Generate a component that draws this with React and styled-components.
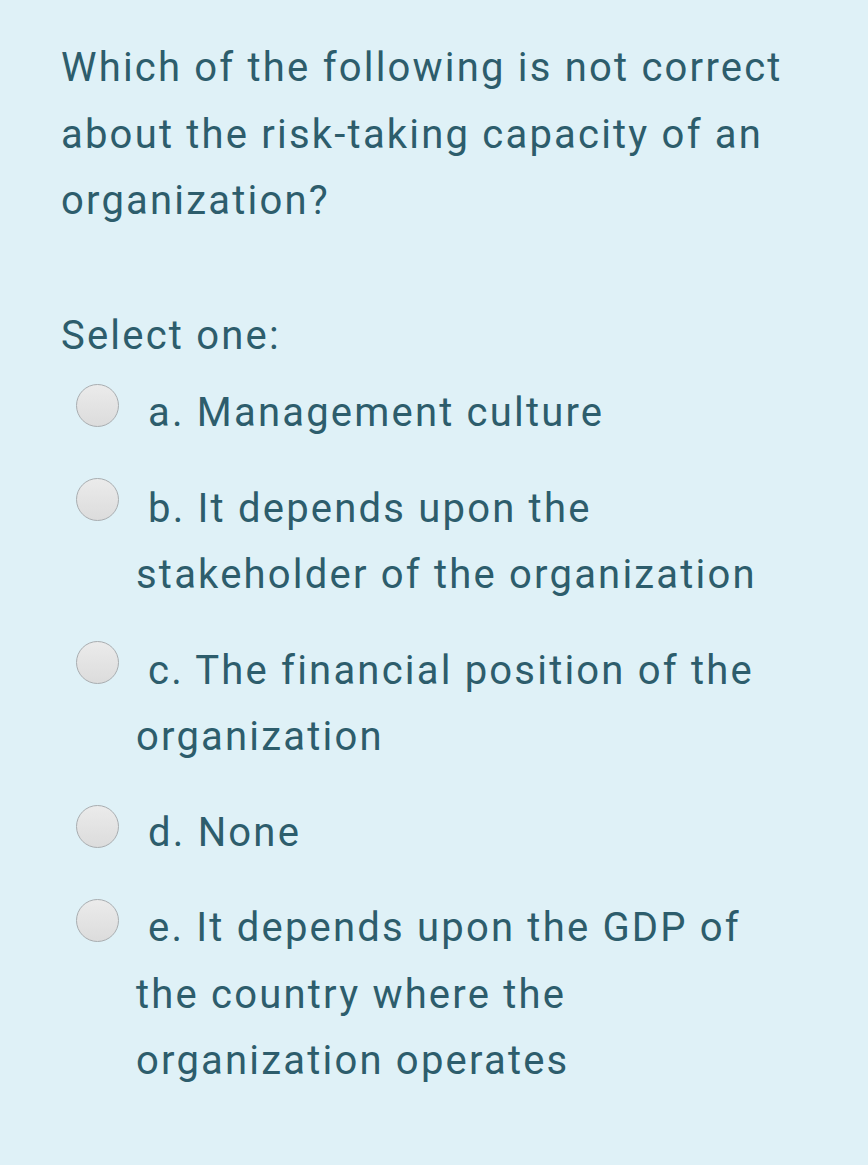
import React from "react";
import styled, { createGlobalStyle } from "styled-components";

const Global = createGlobalStyle`
  html, body { margin: 0; padding: 0; background: #dff1f7; }
  body { font-family: Roboto, "Noto Sans", "Liberation Sans", sans-serif; }
`;

const Page = styled.div`
  min-height: 1165px;
  box-sizing: border-box;
  background: #dff1f7;
  padding: 35px 40px 0 61px;
  color: #2d5d6c;
  font-size: 40px;
  line-height: 66.5px;
  letter-spacing: 2.2px;
`;

const Question = styled.p`
  margin: 0;
  width: 735px;
`;

const Prompt = styled.div`
  margin-top: 68px;
`;

const Answers = styled.div`
  display: flex;
  flex-direction: column;
  gap: 29px;
  margin-top: 11px;
`;

const Option = styled.label`
  display: flex;
  align-items: flex-start;
  padding-left: 15px;
`;

const Radio = styled.span`
  flex: none;
  width: 43px;
  height: 43px;
  box-sizing: border-box;
  border-radius: 50%;
  border: 1.5px solid #a9adb0;
  background: linear-gradient(#ebebeb, #dcdcdc);
  margin-top: ${(p) => p.$top}px;
  margin-right: 17px;
`;

const Label = styled.span`
  text-indent: 12px;
  width: 660px;
`;

const options = [
  { text: "a. Management culture", top: 4 },
  { text: "b. It depends upon the stakeholder of the organization", top: 2 },
  { text: "c. The financial position of the organization", top: 3 },
  { text: "d. None", top: 5 },
  { text: "e. It depends upon the GDP of the country where the organization operates", top: 4 },
];

export default function App() {
  return (
    <>
      <Global />
      <Page>
        <Question>
          Which of the following is not correct about the risk-taking capacity of an organization?
        </Question>
        <Prompt>Select one:</Prompt>
        <Answers>
          {options.map((o) => (
            <Option key={o.text}>
              <Radio $top={o.top} />
              <Label>{o.text}</Label>
            </Option>
          ))}
        </Answers>
      </Page>
    </>
  );
}
